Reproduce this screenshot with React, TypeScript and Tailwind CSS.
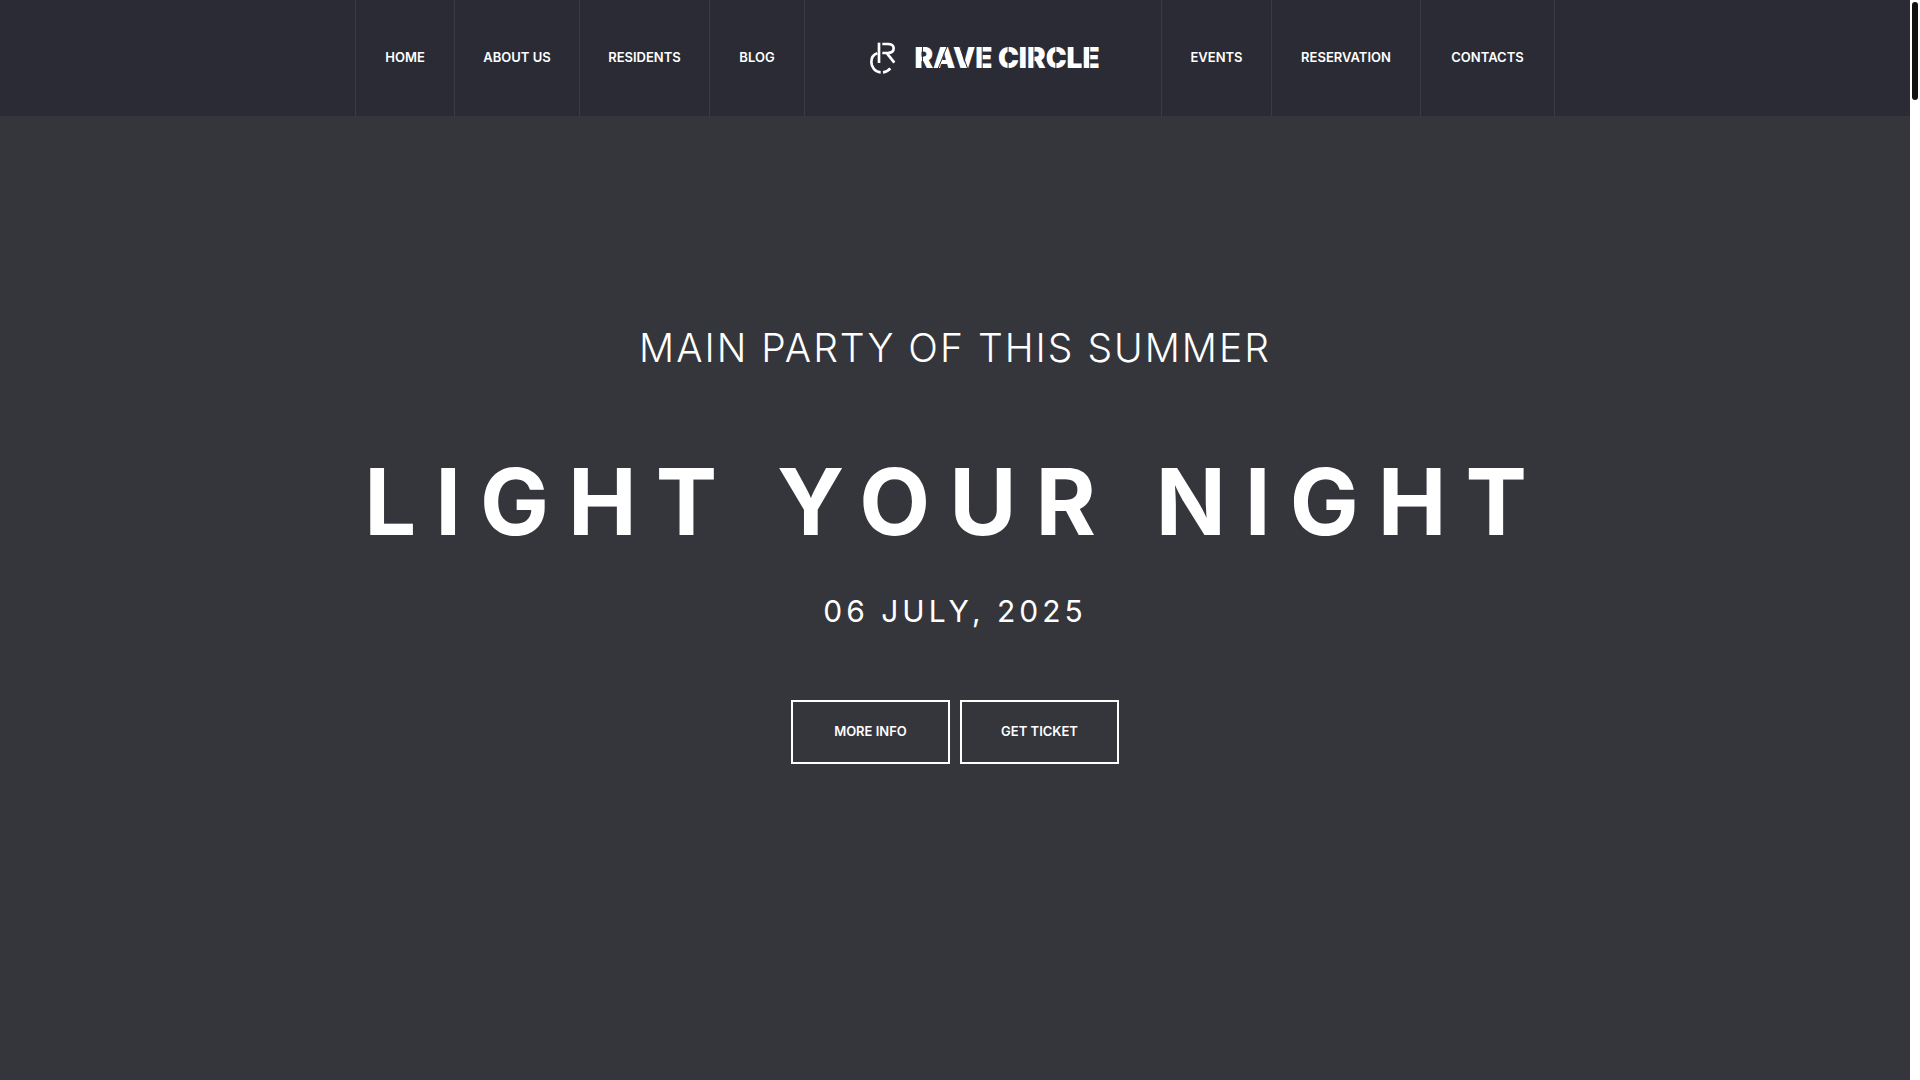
const leftLinks = [
  { label: 'Home', cell: 'w-[99px]' },
  { label: 'About us', cell: 'w-[125px]' },
  { label: 'Residents', cell: 'w-[130px]' },
  { label: 'Blog', cell: 'w-[95px]' },
];

const rightLinks = [
  { label: 'Events', cell: 'w-[110px]' },
  { label: 'Reservation', cell: 'w-[149px]' },
  { label: 'Contacts', cell: 'w-[134px]' },
];

function NavLink({ label, cell }: { label: string; cell: string }) {
  return (
    <li className={`${cell} flex border-l border-[#3b3b45]`}>
      <a
        href="#"
        className="flex-1 flex items-center justify-center whitespace-nowrap text-[13px] font-semibold uppercase hover:text-white/70"
      >
        {label}
      </a>
    </li>
  );
}

function Logo() {
  return (
    <a href="#" className="flex flex-1 items-center justify-center gap-[18px] border-l border-[#3b3b45] pl-1">
      <svg viewBox="0 0 78 96" className="w-[26px] h-8" fill="none" stroke="#fff" strokeWidth="8" aria-hidden="true">
        <path d="M27 2V63" />
        <path d="M37 6H53C65 6 71 11 71 19C71 28 64 33 53 33H37" />
        <path d="M51 34L73 62" />
        <path d="M22 34C10 38 4 48 4 60C4 77 16 90 32 91" />
        <path d="M39 91C48 90 55 86 61 79" />
      </svg>
      <span className="relative text-[28px] leading-8 font-black uppercase whitespace-nowrap">
        Rave Circle
        {/* Stencil cuts across the wordmark */}
        <svg
          viewBox="0 0 186 32"
          className="absolute inset-0 h-full w-full"
          fill="none"
          stroke="#2b2b35"
          strokeWidth="1"
          aria-hidden="true"
        >
          <path d="M8.5 5V27M68.5 5V27M94.5 5V27M120.5 5V27M142.5 5V27M176.5 5V27" />
          <path d="M24 27L33 5M54 27L46 5" />
        </svg>
      </span>
    </a>
  );
}

function Header() {
  return (
    <header className="bg-[#2b2b35]">
      <nav className="mx-auto flex h-[116px] w-full max-w-[1200px] border-r border-[#3b3b45]">
        <ul className="flex">
          {leftLinks.map(link => (
            <NavLink key={link.label} {...link} />
          ))}
        </ul>
        <Logo />
        <ul className="flex">
          {rightLinks.map(link => (
            <NavLink key={link.label} {...link} />
          ))}
        </ul>
      </nav>
    </header>
  );
}

function Hero() {
  const button =
    'h-16 w-[159px] border-2 border-white text-[13px] font-semibold uppercase hover:bg-white hover:text-[#35363b]';

  return (
    <main className="flex flex-1 flex-col items-center pt-[200px] text-center uppercase">
      <p className="text-[39px] leading-[64px] font-light tracking-[2px]">Main party of this summer</p>
      <h1 className="mt-14 text-[92px] leading-[132px] font-bold tracking-[19px]">Light your night</h1>
      <p className="mt-5 text-[30px] leading-[46px] tracking-[4px]">06 July, 2025</p>
      <div className="mt-[66px] flex gap-[10px]">
        <button type="button" className={button}>More info</button>
        <button type="button" className={button}>Get ticket</button>
      </div>
    </main>
  );
}

export default function App() {
  return (
    <div className="flex min-h-screen bg-[#35363b] font-['Inter',sans-serif] text-white">
      <div className="flex min-w-0 flex-1 flex-col">
        <Header />
        <Hero />
      </div>
      {/* Scrollbar */}
      <div className="w-[10px] shrink-0 bg-white p-[2px]">
        <div className="h-[98px] rounded-full bg-[#111]" />
      </div>
    </div>
  );
}
